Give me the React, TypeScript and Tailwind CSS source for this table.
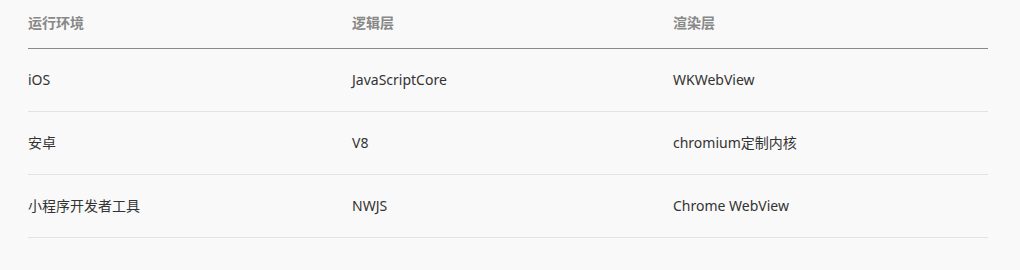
const rows = [
  ["iOS", "JavaScriptCore", "WKWebView"],
  ["安卓", "V8", "chromium定制内核"],
  ["小程序开发者工具", "NWJS", "Chrome WebView"],
]

export default function App() {
  return (
    <div className="w-[1020px] h-[270px] bg-[#f9f9f9] px-[28px] font-['Noto_Sans','Noto_Sans_CJK_SC',sans-serif] text-[14px]">
      <table className="w-[960px] border-collapse table-fixed">
        <colgroup>
          <col className="w-[324px]" />
          <col className="w-[321px]" />
          <col />
        </colgroup>
        <thead>
          <tr className="h-[48px] border-b border-[#8a8a8a]">
            <th className="text-left font-bold text-[#888] align-middle pb-[2px]">运行环境</th>
            <th className="text-left font-bold text-[#888] align-middle pb-[2px]">逻辑层</th>
            <th className="text-left font-bold text-[#888] align-middle pb-[2px]">渲染层</th>
          </tr>
        </thead>
        <tbody>
          {rows.map((r, i) => (
            <tr key={i} className="h-[63px] border-b border-[#e3e3e3]">
              {r.map((c, j) => (
                <td key={j} className="text-[#333] align-middle">{c}</td>
              ))}
            </tr>
          ))}
        </tbody>
      </table>
    </div>
  )
}
